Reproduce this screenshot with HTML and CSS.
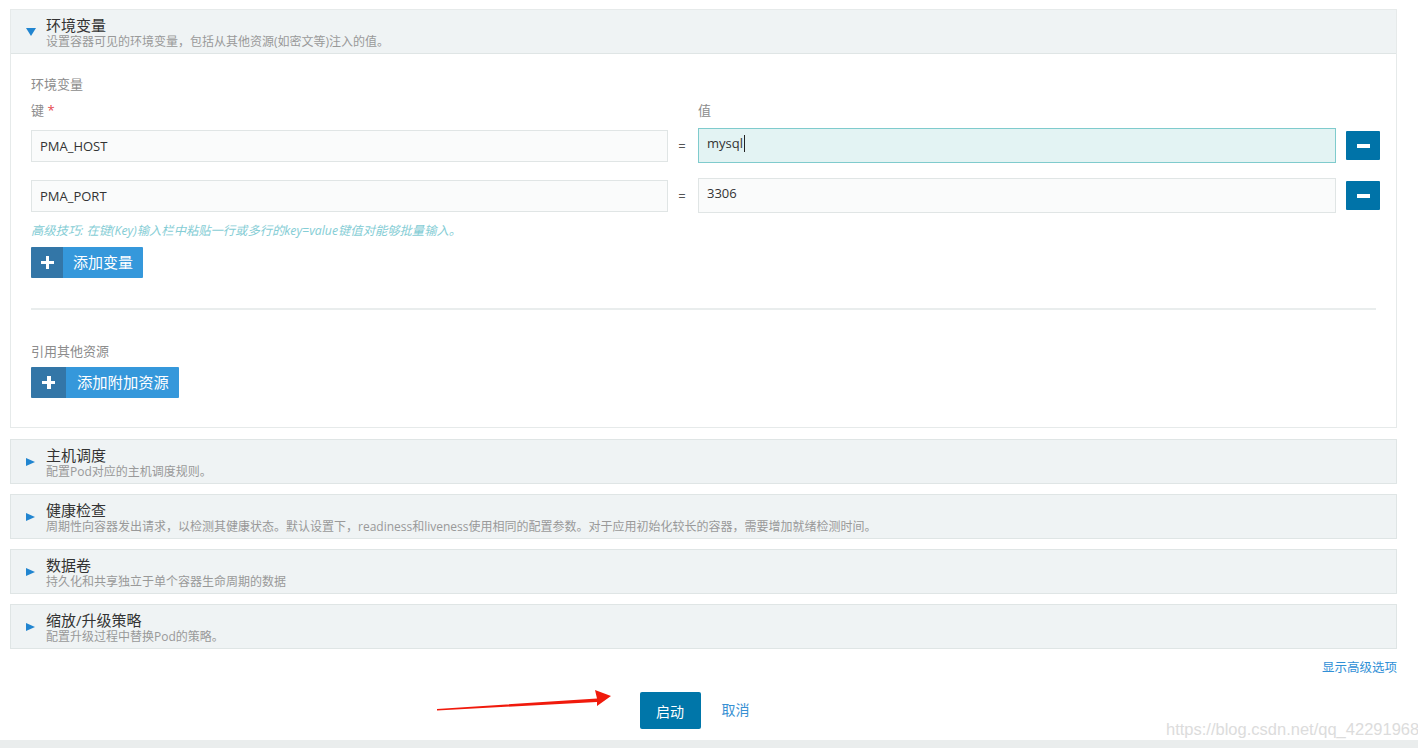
FILE: index.html
```html
<!DOCTYPE html>
<html lang="zh-CN">
<head>
<meta charset="utf-8">
<title>环境变量</title>
<link rel="stylesheet" href="styles.css">
</head>
<body>
<div class="page">
  <div class="panel open">
    <div class="panel-head">
      <span class="tri down"></span>
      <div class="head-text">
        <div class="head-title">环境变量</div>
        <div class="head-sub">设置容器可见的环境变量，包括从其他资源(如密文等)注入的值。</div>
      </div>
    </div>
    <div class="panel-body">
      <div class="label">环境变量</div>
      <div class="env-labels">
        <div class="label">键 <span class="req">*</span></div>
        <div class="label">值</div>
      </div>
      <div class="env-grid">
        <div class="field key">PMA_HOST</div>
        <div class="eq">=</div>
        <div class="field val focus">mysql<span class="caret"></span></div>
        <button class="minus" type="button"><span></span></button>

        <div class="field key">PMA_PORT</div>
        <div class="eq">=</div>
        <div class="field val">3306</div>
        <button class="minus" type="button"><span></span></button>
      </div>
      <div class="hint">高级技巧: 在键(Key)输入栏中粘贴一行或多行的key=value键值对能够批量输入。</div>
      <button class="icon-btn" type="button"><span class="ib-icon"><span class="plus"></span></span><span class="ib-text">添加变量</span></button>
      <div class="divider"></div>
      <div class="label ref">引用其他资源</div>
      <button class="icon-btn wide" type="button"><span class="ib-icon"><span class="plus"></span></span><span class="ib-text">添加附加资源</span></button>
    </div>
  </div>

  <div class="panel">
    <div class="panel-head">
      <span class="tri right"></span>
      <div class="head-text">
        <div class="head-title">主机调度</div>
        <div class="head-sub">配置Pod对应的主机调度规则。</div>
      </div>
    </div>
  </div>
  <div class="panel">
    <div class="panel-head">
      <span class="tri right"></span>
      <div class="head-text">
        <div class="head-title">健康检查</div>
        <div class="head-sub">周期性向容器发出请求，以检测其健康状态。默认设置下，readiness和liveness使用相同的配置参数。对于应用初始化较长的容器，需要增加就绪检测时间。</div>
      </div>
    </div>
  </div>
  <div class="panel">
    <div class="panel-head">
      <span class="tri right"></span>
      <div class="head-text">
        <div class="head-title">数据卷</div>
        <div class="head-sub">持久化和共享独立于单个容器生命周期的数据</div>
      </div>
    </div>
  </div>
  <div class="panel">
    <div class="panel-head">
      <span class="tri right"></span>
      <div class="head-text">
        <div class="head-title">缩放/升级策略</div>
        <div class="head-sub">配置升级过程中替换Pod的策略。</div>
      </div>
    </div>
  </div>

  <div class="adv"><a href="#">显示高级选项</a></div>

  <div class="actions">
    <button class="primary" type="button">启动</button>
    <a class="cancel" href="#">取消</a>
  </div>
</div>
<div class="bottom-band"></div>

<svg class="arrow" width="200" height="40" viewBox="430 685 200 40" aria-hidden="true">
  <polygon points="437,709 597,698.5 595,690 611,696 597,706 597,702 437,710.5" fill="#f01a0c"/>
</svg>
<div class="watermark">https://blog.csdn.net/qq_42291968</div>
</body>
</html>
```

FILE: styles.css
```css
* { box-sizing: border-box; }
html, body { margin: 0; padding: 0; }
body {
  width: 1418px;
  height: 748px;
  overflow: hidden;
  background: #fff;
  font-family: "Open Sans", "Noto Sans CJK SC", sans-serif;
  color: #333;
  position: relative;
}
.page {
  padding: 9px 21px 0 10px;
  height: 740px;
}
.panel {
  border: 1px solid #dfe5e5;
  margin-bottom: 10px;
}
.panel.open { border-color: #e6eaea; margin-bottom: 11px; }
.panel-head {
  background: #eff3f4;
  height: 43px;
  display: flex;
  align-items: flex-start;
  padding: 5px 0 0 15px;
}
.panel.open .panel-head { border-bottom: 1px solid #dfe5e5; height: 44px; }
.tri {
  width: 0; height: 0;
  margin-top: 13px;
  margin-right: 11px;
  flex: none;
}
.tri.right {
  border-top: 4.5px solid transparent;
  border-bottom: 4.5px solid transparent;
  border-left: 9px solid #2185d0;
}
.tri.down {
  margin-top: 13px;
  margin-right: 10px;
  border-left: 5px solid transparent;
  border-right: 5px solid transparent;
  border-top: 8px solid #2185d0;
}
.head-title {
  font-size: 15px;
  line-height: 20px;
  color: #333;
}
.head-sub {
  font-size: 12px;
  line-height: 14px;
  color: #999;
  white-space: nowrap;
}
.panel-body {
  padding: 21px 16px 29px 20px;
}
.label {
  font-size: 13px;
  line-height: 18px;
  color: #8c8c8c;
}
.req { color: #e5484d; }
.env-labels {
  display: grid;
  grid-template-columns: 667px 1fr;
  margin-top: 8px;
}
.env-grid {
  display: grid;
  grid-template-columns: 637px 30px 638px 44px;
  grid-auto-rows: 35px;
  row-gap: 15px;
  align-items: center;
  margin-top: 9px;
}
.field {
  height: 32px;
  border: 1px solid #e0e5e5;
  background: #fafbfb;
  font-size: 13px;
  line-height: 30px;
  padding-left: 8px;
  color: #333;
  white-space: nowrap;
}
.field.val {
  height: 35px;
  line-height: 29px;
}
.field.focus {
  background: #e3f3f3;
  border-color: #7fcbcd;
}
.caret {
  display: inline-block;
  width: 1px;
  height: 17px;
  background: #222;
  vertical-align: middle;
  margin-left: 1px;
  margin-top: -3px;
}
.eq {
  text-align: center;
  font-size: 13px;
  color: #555;
  padding-right: 2px;
}
.minus {
  justify-self: end;
  width: 34px;
  height: 29px;
  border: none;
  border-radius: 1px;
  background: #0073a8;
  padding: 0;
  display: flex;
  align-items: center;
  justify-content: center;
}
.minus span {
  width: 13px;
  height: 4px;
  background: #fff;
}
.hint {
  margin-top: 9px;
  font-size: 12.3px;
  line-height: 18px;
  font-style: italic;
  color: #85cdd5;
}
.icon-btn {
  margin-top: 7px;
  display: flex;
  height: 31px;
  border: none;
  padding: 0;
  border-radius: 1px;
  overflow: hidden;
  font-family: inherit;
  cursor: pointer;
}
.ib-icon {
  width: 32px;
  background: #3376a7;
  display: flex;
  align-items: center;
  justify-content: center;
}
.icon-btn.wide .ib-icon { width: 35px; }
.plus {
  position: relative;
  width: 13px;
  height: 13px;
}
.plus::before, .plus::after {
  content: "";
  position: absolute;
  background: #fff;
}
.plus::before { left: 5px; top: 0; width: 3.5px; height: 13px; }
.plus::after { top: 4.7px; left: 0; height: 3.5px; width: 13px; }
.ib-text {
  background: #3598db;
  color: #fff;
  font-size: 15px;
  line-height: 31px;
  padding: 0 10px;
}
.icon-btn.wide .ib-text { padding: 0 10px 0 11px; font-size: 15.3px; }
.divider {
  margin-top: 30px;
  height: 2px;
  background: #e9eded;
  margin-right: 4px;
}
.label.ref { margin-top: 32px; }
.adv {
  text-align: right;
  margin-top: 7px;
  font-size: 12.5px;
  line-height: 18px;
}
.adv a { color: #2f8fd6; text-decoration: none; }
.actions {
  display: flex;
  justify-content: center;
  align-items: center;
  gap: 21px;
  margin-top: 15px;
  padding-right: 18px;
}
.primary {
  width: 61px;
  height: 37px;
  border: none;
  border-radius: 2px;
  background: #0076a9;
  color: #fff;
  font-family: inherit;
  font-size: 14px;
  padding: 0;
}
.cancel {
  color: #3790d3;
  text-decoration: none;
  font-size: 14px;
  margin-top: -3px;
}
.bottom-band {
  height: 8px;
  background: #eaeded;
}
.arrow {
  position: absolute;
  left: 430px;
  top: 685px;
}
.watermark {
  position: absolute;
  left: 1166px;
  top: 718px;
  font-family: "Liberation Sans", Arial, sans-serif;
  font-size: 16.5px;
  line-height: 22px;
  color: #dcdcdc;
  white-space: nowrap;
}
```
